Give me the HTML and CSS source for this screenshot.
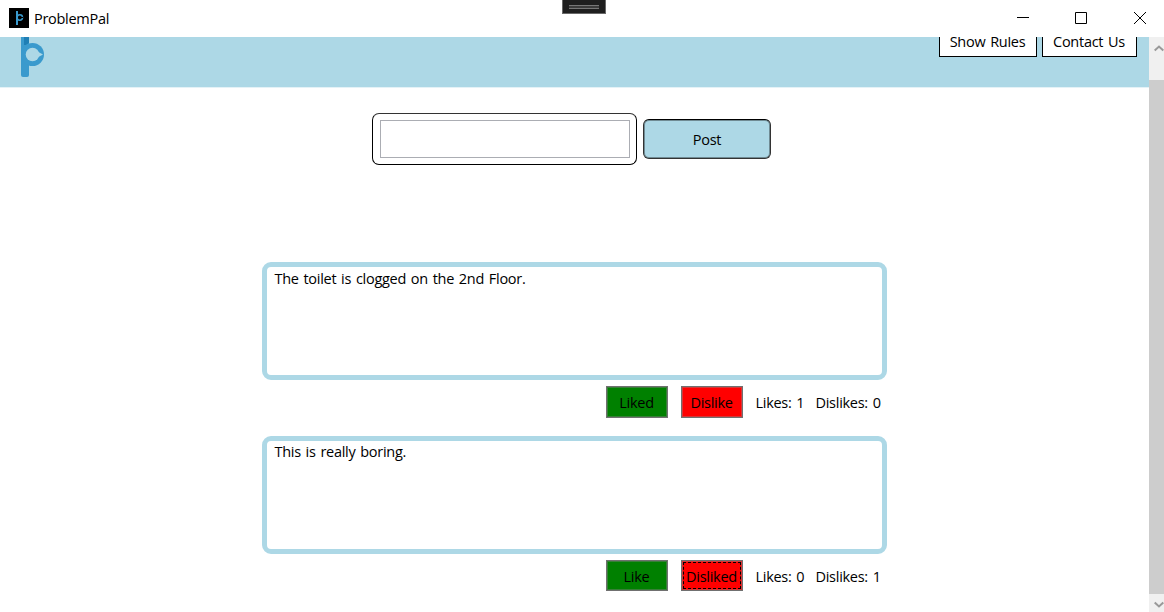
FILE: index.html
```
<!DOCTYPE html>
<html lang="en">
<head>
<meta charset="utf-8">
<title>ProblemPal</title>
<link rel="stylesheet" href="styles.css">
</head>
<body>
<div class="window">
  <header class="titlebar">
    <svg class="app-icon" width="20" height="20" viewBox="0 0 20 20"><rect width="20" height="20" fill="#000"/><path d="M8 3v14" stroke="#3a9bcf" stroke-width="2"/><circle cx="10.800" cy="9.500" r="2.700" stroke="#3a9bcf" stroke-width="1.500" fill="none"/><path d="M12 9.500h2" stroke="#000" stroke-width="1"/></svg>
    <span class="title">ProblemPal</span>
    <div class="controls">
      <svg width="12" height="12" viewBox="0 0 12 12"><path d="M0 5.5h12"/></svg>
      <svg width="12" height="12" viewBox="0 0 12 12"><path d="M.5.5h11v11H.5z"/></svg>
      <svg width="12" height="12" viewBox="0 0 12 12"><path d="M0 0l12 12M12 0L0 12"/></svg>
    </div>
    <div class="debug-handle"><i></i></div>
  </header>
  <div class="body">
    <main class="content">
      <div class="banner">
        <svg class="logo" width="24" height="41" viewBox="0 0 24 41"><path d="M0 0h8v38q0 2-2 2H2q-2 0-2-2z" fill="#3a9acd"/><path d="M3 0h5v6L5 8H3z" fill="#1f7fb5"/><circle cx="11.500" cy="17.500" r="11.500" fill="#3a9acd"/><circle cx="11.500" cy="17.500" r="6.800" fill="#add8e6"/><path d="M16.500 14.500l5.500 3-5.500 3z" fill="#add8e6"/></svg>
        <nav class="links"><button class="link rules"><span>Show Rules</span></button><button class="link contact"><span>Contact Us</span></button></nav>
      </div>
      <section class="composer">
        <div class="input-frame"><input class="input" type="text" aria-label="Problem"></div>
        <button class="post-button"><span>Post</span></button>
      </section>
      <section class="feed">
        <article class="post">
          <div class="card"><span class="message">The toilet is clogged on the 2nd Floor.</span></div>
          <div class="actions"><button class="vote like">Liked</button><button class="vote dislike">Dislike</button><span class="likes">Likes: 1</span><span class="dislikes">Dislikes: 0</span></div>
        </article>
        <article class="post second">
          <div class="card"><span class="message">This is really boring.</span></div>
          <div class="actions"><button class="vote like">Like</button><button class="vote dislike focused">Disliked</button><span class="likes">Likes: 0</span><span class="dislikes">Dislikes: 1</span></div>
        </article>
      </section>
    </main>
    <aside class="scrollbar">
      <div class="scroll-top"><svg width="10" height="7" viewBox="0 0 10 7"><path d="M.7 5.500L5 1.500l4.300 4"/></svg></div>
      <div class="thumb"></div>
      <div class="scroll-bottom"><svg width="10" height="7" viewBox="0 0 10 7"><path d="M.7 1.500L5 5.500l4.300-4"/></svg></div>
    </aside>
  </div>
</div>
</body>
</html>
```
FILE: styles.css
```
* { box-sizing: border-box; }
body { margin: 0; background: #fff; color: #000; font: 14.5px/20px "Open Sans", "Noto Sans", sans-serif; letter-spacing: -0.28px; word-spacing: 1.3px; }
button { font: inherit; letter-spacing: inherit; word-spacing: inherit; color: #000; padding: 0; margin: 0; border-radius: 0; white-space: nowrap; }
svg { display: block; }
.window { width: 1164px; height: 612px; overflow: hidden; display: flex; flex-direction: column; }
.titlebar { position: relative; height: 37px; flex: none; display: flex; align-items: center; padding: 0 18px 1px 9px; }
.title { margin-left: 5px; padding-top: 2px; }
.controls { margin-left: auto; display: flex; gap: 46px; }
.controls svg { fill: none; stroke: #000; stroke-width: 1; }
.controls svg:last-child { margin-left: 1px; }
.debug-handle { position: absolute; left: 562px; top: 0; width: 44px; height: 14px; background: #1f1f1f; border: 1px solid #686868; border-top: 0; padding: 5px 6px; }
.debug-handle i { display: block; height: 4px; background: #3c3c3c; border: solid #777; border-width: 1px 0; }
.body { flex: 1; min-height: 0; display: flex; }
.content { width: 1149px; }
.banner { height: 50px; background: #add8e6; display: flex; justify-content: space-between; padding: 0 12px 0 21px; box-shadow: 0 1px 0 #e4f2f7; }
.links { display: flex; gap: 5px; }
.link { height: 20px; background: #fff; border: 1px solid #000; border-top: 0; line-height: 20px; overflow: hidden; display: flex; justify-content: center; align-items: center; }
.link span { margin-top: -9px; margin-left: -1px; }
.rules { width: 98px; }
.contact { width: 95px; }
.composer { display: flex; padding: 26px 0 0 372px; }
.input-frame { width: 265px; height: 52px; border: 1px solid #000; border-top-color: #333; border-radius: 7px; padding: 6px 6px 7px 7px; }
.input { display: block; width: 250px; height: 38px; border: 1px solid #abadb3; background: #fff; padding: 0; outline: 0; }
.post-button { width: 128px; height: 40px; margin: 6px 0 0 6px; padding-top: 2px; border: 1px solid #333; border-top-color: #000; border-radius: 6px; background: #add8e6; box-shadow: inset 0 0 0 1px #708b94; }
.feed { padding: 97px 0 0 262px; }
.post { width: 625px; height: 174px; }
.card { height: 118px; border: 5px solid #add8e6; border-radius: 9px; padding: 2px 7.5px; }
.second .card { padding-top: 1px; }
.message { display: block; }
.actions { height: 32px; margin-top: 6px; display: flex; align-items: flex-start; padding-left: 344px; white-space: nowrap; }
.actions span { padding-top: 7px; }
.vote { width: 62px; height: 32px; padding: 2px 1px 0 0; border: 1px solid #707070; }
.like { background: #008000; box-shadow: inset 0 0 0 1px #388038; }
.dislike { background: #f00; margin-left: 13px; box-shadow: inset 0 0 0 1px #d63838; }
.focused { position: relative; }
.focused::after { content: ""; position: absolute; inset: 1px; border: 1px dashed #000; }
.second .vote { height: 31px; padding-top: 3px; }
.likes { width: 48px; margin-left: 12.5px; }
.dislikes { margin-left: 12px; }
.scrollbar { width: 15px; height: 575px; background: #f0f0f0; overflow: hidden; display: flex; flex-direction: column; }
.scrollbar svg { fill: none; stroke: #999; stroke-width: 2; margin-left: 5px; }
.scroll-top { height: 43px; padding-top: 8px; }
.thumb { height: 514px; background: #cdcdcd; }
.scroll-bottom { height: 18px; padding-top: 7px; }
```
